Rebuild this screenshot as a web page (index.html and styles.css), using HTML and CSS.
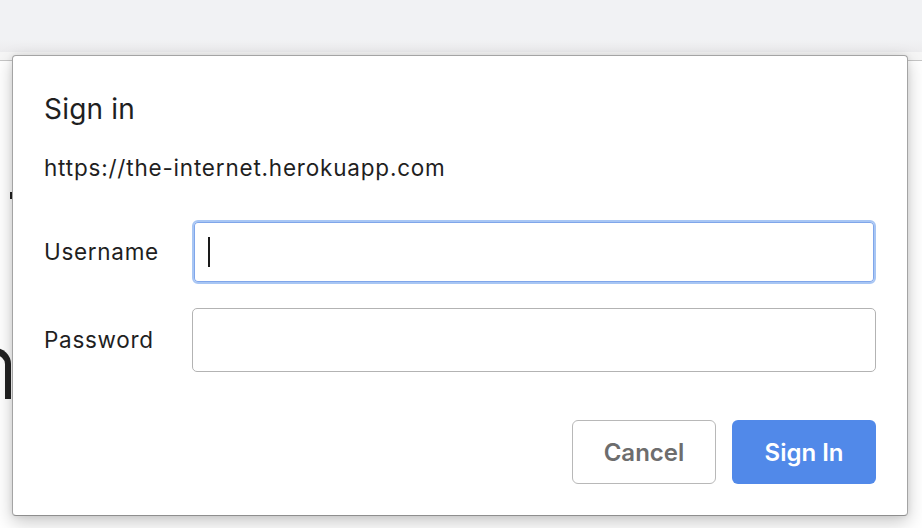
FILE: index.html
```html
<!DOCTYPE html>
<html lang="en">
<head>
<meta charset="utf-8">
<title>Sign in</title>
<link rel="stylesheet" href="styles.css">
</head>
<body>
<div class="toolbar"></div>
<div class="page">
  <span class="behind-mark"></span>
  <span class="behind-arc"></span>
</div>
<div class="dialog">
  <div class="title">Sign in</div>
  <div class="origin">https://the-internet.herokuapp.com</div>
  <div class="form">
    <div class="row">
      <label class="label">Username</label>
      <div class="field focused"><span class="caret"></span></div>
    </div>
    <div class="row">
      <label class="label">Password</label>
      <div class="field"></div>
    </div>
  </div>
  <div class="actions">
    <div class="btn cancel">Cancel</div>
    <div class="btn primary">Sign In</div>
  </div>
</div>
</body>
</html>
```
FILE: styles.css
```css
html, body {
  margin: 0;
  padding: 0;
  width: 922px;
  height: 528px;
  overflow: hidden;
  background: #ffffff;
  font-family: Inter, "Liberation Sans", sans-serif;
  color: #202124;
}
.toolbar {
  height: 52px;
  background: linear-gradient(#f1f2f4 0, #f1f2f4 40px, #ececee 52px);
}
.page {
  position: relative;
  height: 476px;
  border-top: 8px solid #f6f6f6;
  box-sizing: border-box;
}
.page::before {
  content: "";
  display: block;
  height: 1px;
  background: #c6c6c6;
}
.behind-mark {
  position: absolute;
  left: 10px;
  top: 132px;
  width: 3px;
  height: 7px;
  background: #222;
}
.behind-arc {
  position: absolute;
  left: -12px;
  top: 288px;
  width: 17px;
  height: 44px;
  border-top: 7px solid #222;
  border-right: 6px solid #222;
  border-top-right-radius: 16px;
}
.dialog {
  position: absolute;
  left: 12px;
  top: 55px;
  width: 896px;
  height: 461px;
  box-sizing: border-box;
  background: #ffffff;
  border: 1px solid #a4a4a4;
  border-bottom-color: #8e8e8e;
  border-radius: 4px;
  box-shadow: 0 6px 18px rgba(0, 0, 0, 0.22), 0 0 6px rgba(0, 0, 0, 0.08);
  padding: 0 31px 0 31px;
  display: flex;
  flex-direction: column;
}
.title {
  margin-top: 35px;
  font-size: 28px;
  line-height: 36px;
  color: #1f1f1f;
  letter-spacing: 0.2px;
}
.origin {
  margin-top: 27px;
  font-size: 22.5px;
  line-height: 28px;
  color: #1f1f1f;
  letter-spacing: 0.8px;
}
.form {
  margin-top: 38px;
  display: flex;
  flex-direction: column;
  gap: 24px;
}
.row {
  display: flex;
  align-items: center;
}
.label {
  flex: 0 0 148px;
  font-size: 22.5px;
  line-height: 28px;
  color: #1f1f1f;
  letter-spacing: 0.7px;
}
.field {
  flex: 0 0 684px;
  height: 64px;
  box-sizing: border-box;
  border: 1px solid #b3b3b3;
  border-radius: 5px;
  display: flex;
  align-items: center;
  padding-left: 15px;
}
.field.focused {
  border: 2px solid #a8c6f4;
  box-shadow: inset 0 0 0 1px #80a6ea;
  border-radius: 6px;
  padding-left: 14px;
}
.caret {
  width: 2px;
  height: 30px;
  background: #1a1a1a;
}
.actions {
  margin-top: 48px;
  display: flex;
  justify-content: flex-end;
  gap: 16px;
}
.btn {
  width: 144px;
  height: 64px;
  box-sizing: border-box;
  border-radius: 6px;
  display: flex;
  align-items: center;
  justify-content: center;
  font-size: 24px;
  font-weight: 600;
}
.cancel {
  border: 1px solid #b8b8b8;
  color: #6d6d6d;
  background: #ffffff;
}
.primary {
  background: #5189e9;
  color: #ffffff;
}
```
